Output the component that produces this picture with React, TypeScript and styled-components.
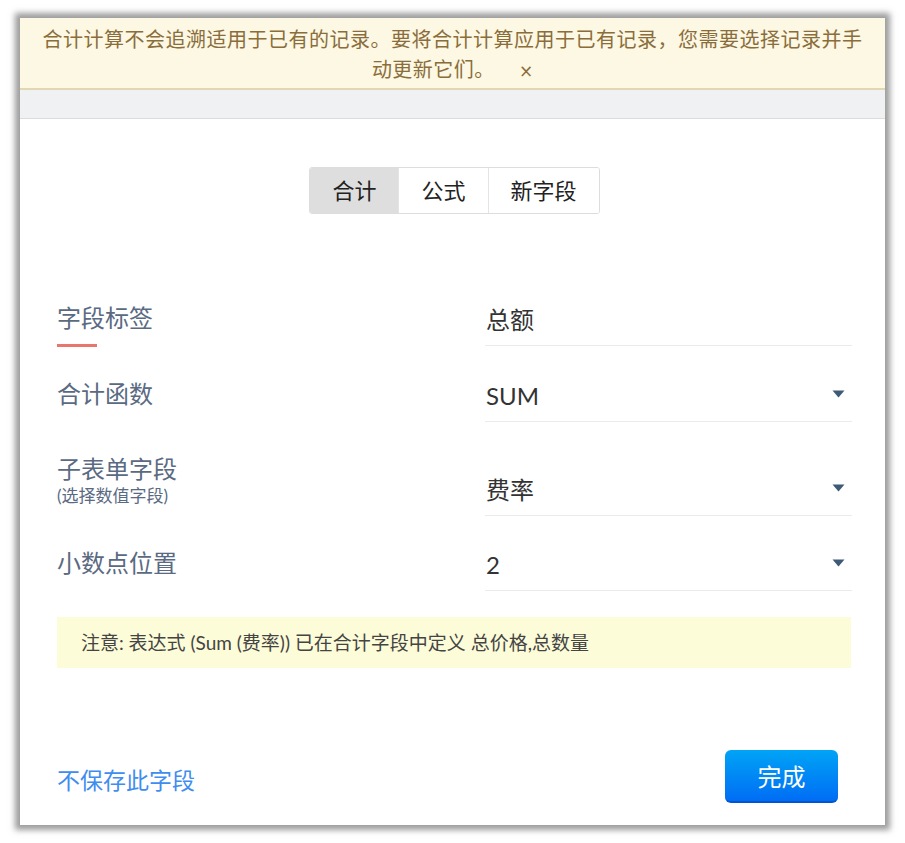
import React from "react";
import styled, { createGlobalStyle } from "styled-components";

const GlobalStyle = createGlobalStyle`
  html, body {
    margin: 0;
    padding: 0;
    background: #ffffff;
  }
  body {
    font-family: "Lato", "Noto Sans CJK SC", sans-serif;
    color: #333;
  }
`;

const Page = styled.div`
  padding: 18px 20px;
`;

const Dialog = styled.div`
  width: 865px;
  height: 807px;
  background: #ffffff;
  box-shadow: 0 0 6px 5px rgba(90, 90, 90, 0.6);
  display: flex;
  flex-direction: column;
  box-sizing: border-box;
`;

const Banner = styled.div`
  background: #fcf8e3;
  border-bottom: 2px solid #e3d7b3;
  color: #8a6d3b;
  font-size: 20px;
  line-height: 30px;
  text-align: center;
  padding: 6px 8px 2px;
  white-space: nowrap;
`;

const BannerLine = styled.span`
  letter-spacing: 0.5px;
`;

const CloseX = styled.span`
  margin-left: 24px;
  font-family: "DejaVu Sans", sans-serif;
  font-size: 17px;
  color: #8a6d3b;
`;

const Strip = styled.div`
  height: 28px;
  background: #f0f1f3;
  border-bottom: 1px solid #dcdcdc;
`;

const Body = styled.div`
  flex: 1;
  display: flex;
  flex-direction: column;
  padding: 48px 33px 22px 37px;
`;

const Tabs = styled.div`
  align-self: center;
  display: flex;
  height: 47px;
  border: 1px solid #dddddd;
  border-radius: 3px;
  box-sizing: border-box;
  overflow: hidden;
`;

const Tab = styled.div<{ $active?: boolean }>`
  padding: 0 22px;
  font-size: 22px;
  line-height: 45px;
  color: #222;
  background: ${(p) => (p.$active ? "#dedede" : "#ffffff")};
  & + & {
    border-left: 1px solid #e4e4e4;
  }
`;

const Form = styled.div`
  margin-top: 87px;
  display: flex;
  flex-direction: column;
  gap: 30px;
`;

const Row = styled.div`
  display: grid;
  grid-template-columns: 428px 367px;
  align-items: start;
`;

const LabelBox = styled.div`
  display: flex;
  flex-direction: column;
  align-items: flex-start;
`;

const Label = styled.div`
  font-size: 24px;
  line-height: 34px;
  color: #5a6a82;
`;

const SubLabel = styled.div`
  font-size: 17px;
  line-height: 20px;
  color: #5a6a82;
`;

const Underline = styled.div`
  margin-top: 9px;
  width: 40px;
  height: 3px;
  background: #e8766b;
`;

const Field = styled.div<{ $offset?: number }>`
  display: flex;
  align-items: center;
  justify-content: space-between;
  margin-top: ${(p) => p.$offset ?? 2}px;
  padding: 0 7px 8px 1px;
  border-bottom: 1px solid #ebebeb;
  font-size: 24px;
  line-height: 34px;
  color: #333;
`;

const Caret = styled.svg`
  width: 13px;
  height: 8px;
  margin-top: -4px;
`;

const Note = styled.div`
  margin-top: 26px;
  width: 794px;
  height: 51px;
  background: #fdfcd8;
  padding: 0 24px;
  box-sizing: border-box;
  font-size: 19px;
  line-height: 51px;
  color: #444;
`;

const Footer = styled.div`
  margin-top: auto;
  display: flex;
  align-items: center;
  justify-content: space-between;
  width: 781px;
`;

const DiscardLink = styled.a`
  font-size: 23px;
  line-height: 30px;
  color: #3f8def;
  text-decoration: none;
  padding-top: 7px;
  cursor: pointer;
`;

const DoneButton = styled.button`
  width: 113px;
  height: 53px;
  border: none;
  border-bottom: 2px solid #0056d0;
  border-radius: 6px;
  background: linear-gradient(to bottom, #00a4f6, #006df4);
  color: #ffffff;
  font-family: "Lato", "Noto Sans CJK SC", sans-serif;
  font-size: 24px;
  cursor: pointer;
`;

function DropCaret() {
  return (
    <Caret viewBox="0 0 13 8">
      <path d="M0.5 0.5 H12.5 L6.5 7.5 Z" fill="#3e5a77" />
    </Caret>
  );
}

export default function App(): React.JSX.Element {
  return (
    <>
      <GlobalStyle />
      <Page>
        <Dialog>
          <Banner>
            <BannerLine>
              合计计算不会追溯适用于已有的记录。要将合计计算应用于已有记录，您需要选择记录并手
            </BannerLine>
            <br />
            <BannerLine>动更新它们。</BannerLine>
            <CloseX>×</CloseX>
          </Banner>
          <Strip />
          <Body>
            <Tabs>
              <Tab $active>合计</Tab>
              <Tab>公式</Tab>
              <Tab>新字段</Tab>
            </Tabs>

            <Form>
              <Row>
                <LabelBox>
                  <Label>字段标签</Label>
                  <Underline />
                </LabelBox>
                <Field>总额</Field>
              </Row>
              <Row>
                <LabelBox>
                  <Label>合计函数</Label>
                </LabelBox>
                <Field>
                  SUM
                  <DropCaret />
                </Field>
              </Row>
              <Row>
                <LabelBox>
                  <Label>子表单字段</Label>
                  <SubLabel>(选择数值字段)</SubLabel>
                </LabelBox>
                <Field $offset={21}>
                  费率
                  <DropCaret />
                </Field>
              </Row>
              <Row>
                <LabelBox>
                  <Label>小数点位置</Label>
                </LabelBox>
                <Field>
                  2
                  <DropCaret />
                </Field>
              </Row>
            </Form>

            <Note>注意: 表达式 (Sum (费率)) 已在合计字段中定义 总价格,总数量</Note>

            <Footer>
              <DiscardLink>不保存此字段</DiscardLink>
              <DoneButton>完成</DoneButton>
            </Footer>
          </Body>
        </Dialog>
      </Page>
    </>
  );
}
